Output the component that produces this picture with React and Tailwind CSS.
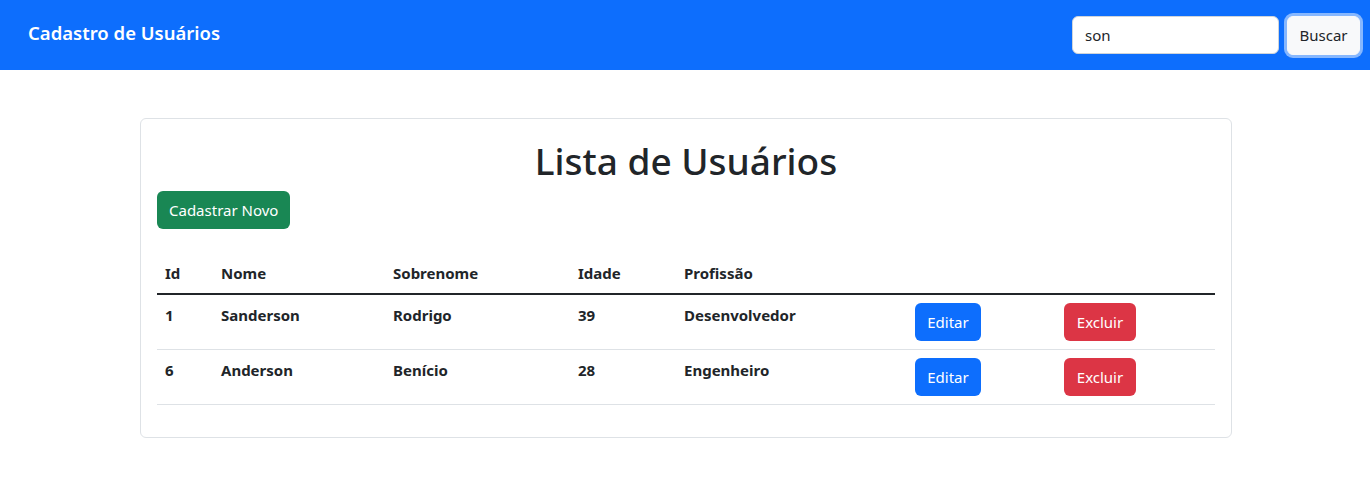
import React from "react";

const usuarios = [
  { id: 1, nome: "Sanderson", sobrenome: "Rodrigo", idade: 39, profissao: "Desenvolvedor" },
  { id: 6, nome: "Anderson", sobrenome: "Benício", idade: 28, profissao: "Engenheiro" },
];

export default function App() {
  return (
    <div className="min-h-screen bg-white text-[15px] text-[#212529]" style={{ fontFamily: '"Noto Sans", "Open Sans", sans-serif' }}>
      <Navbar />
      <div className="mt-12 ml-[140px] w-[1092px] rounded-md border border-[#dee2e6] p-4">
        <h1 className="mt-0.5 text-center text-[37px] font-medium leading-[48px]">Lista de Usuários</h1>
        <button className="mt-1.5 h-[38px] rounded-md bg-[#198754] px-3 leading-6 text-white">
          Cadastrar Novo
        </button>
        <UserTable />
      </div>
    </div>
  );
}

function Navbar() {
  return (
    <nav className="flex h-[70px] items-center justify-between bg-[#0d6efd] pl-7 pr-[10px]">
      <span className="-mt-1 text-[18.5px] font-semibold text-white">Cadastro de Usuários</span>
      <div className="flex items-center gap-2">
        <input
          className="h-[38px] w-[207px] rounded-md border border-[#ced4da] bg-white px-3 text-[15px] text-[#212529] outline-none"
          defaultValue="son"
        />
        <button className="h-[39px] w-[73px] rounded-md border border-[#f8f9fa] bg-[#f8f9fa] text-[15px] text-[#212529] ring-[3px] ring-[#86b7fe]">
          Buscar
        </button>
      </div>
    </nav>
  );
}

function UserTable() {
  return (
    <table className="mt-6 mb-4 w-full border-collapse text-left font-bold">
      <colgroup>
        <col className="w-[56px]" />
        <col className="w-[172px]" />
        <col className="w-[185px]" />
        <col className="w-[106px]" />
        <col className="w-[231px]" />
        <col className="w-[149px]" />
        <col />
      </colgroup>
      <thead>
        <tr className="border-b-2 border-[#212529]">
          <th className="p-2 leading-6">Id</th>
          <th className="p-2 leading-6">Nome</th>
          <th className="p-2 leading-6">Sobrenome</th>
          <th className="p-2 leading-6">Idade</th>
          <th className="p-2 leading-6">Profissão</th>
          <th className="p-2" />
          <th className="p-2" />
        </tr>
      </thead>
      <tbody>
        {usuarios.map((u) => (
          <tr key={u.id} className="border-b border-[#dee2e6] align-top">
            <td className="p-2 leading-6">{u.id}</td>
            <td className="p-2 leading-6">{u.nome}</td>
            <td className="p-2 leading-6">{u.sobrenome}</td>
            <td className="p-2 leading-6">{u.idade}</td>
            <td className="p-2 leading-6">{u.profissao}</td>
            <td className="p-2">
              <button className="h-[38px] w-[66px] rounded-md bg-[#0d6efd] font-normal text-white">Editar</button>
            </td>
            <td className="p-2">
              <button className="h-[38px] w-[72px] rounded-md bg-[#dc3545] font-normal text-white">Excluir</button>
            </td>
          </tr>
        ))}
      </tbody>
    </table>
  );
}
